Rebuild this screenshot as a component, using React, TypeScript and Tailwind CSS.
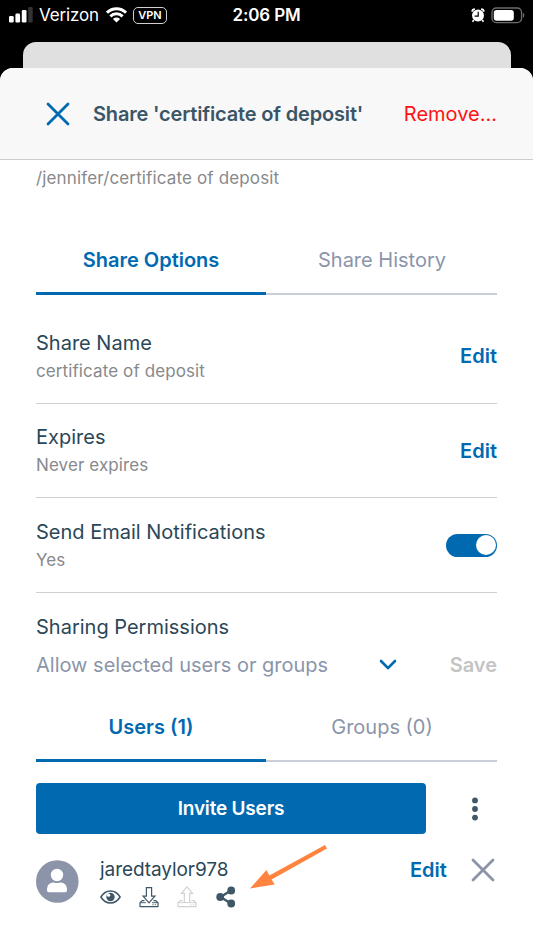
import { ReactNode } from "react";
import clsx from "clsx";

type TabsProps = {
    active: string;
    inactive: string;
    className?: string;
};

type OptionRowProps = {
    title: string;
    value: string;
    action: ReactNode;
    className: string;
};

function SignalIcon() {
    return (
        <svg width="24" height="16" viewBox="0 0 24 16">
            <rect x="0" y="9" width="4.7" height="6.6" rx="1.3" fill="#fff" />
            <rect x="6.4" y="6.6" width="4.7" height="9" rx="1.3" fill="#fff" />
            <rect x="12.8" y="3" width="4.7" height="12.6" rx="1.3" fill="#fff" />
            <rect x="19.2" y="0" width="4.5" height="15.6" rx="1.3" fill="#343434" />
        </svg>
    );
}

function WifiIcon() {
    return (
        <svg width="21" height="16" viewBox="0 0 21 16" fill="none" stroke="#fff" strokeWidth="3">
            <path d="M1 5.7a13.4 13.4 0 0 1 19 0" />
            <path d="M4.4 9.4a8.6 8.6 0 0 1 12.2 0" />
            <path d="M10.5 15.6 6.9 12a5.1 5.1 0 0 1 7.2 0z" fill="#fff" stroke="none" />
        </svg>
    );
}

function AlarmIcon() {
    return (
        <svg width="14" height="15" viewBox="0 0 14 15">
            <circle cx="7" cy="7.5" r="6" fill="#fff" />
            <path d="M1 3.7A3 3 0 0 1 3.9 1.100M13 3.700A3 3 0 0 0 10.100 1.100M2.800 12 1.500 13.700M11.200 12 12.500 13.700" stroke="#fff" strokeWidth="1.700" fill="none" />
            <path d="M7.200 3.800v4.300H3.600" stroke="#000" strokeWidth="1.200" fill="none" />
        </svg>
    );
}

function BatteryIcon() {
    return (
        <svg width="34" height="17" viewBox="0 0 34 17">
            <rect x="1" y="1" width="29.6" height="14.6" rx="4.4" fill="none" stroke="#6b6b6b" strokeWidth="1.4" />
            <rect x="2.8" y="2.9" width="20" height="10.9" rx="2.8" fill="#fff" />
            <path d="M32 5.8c1.8.7 1.8 4.3 0 5z" fill="#6b6b6b" />
        </svg>
    );
}

function CrossIcon({ className }: { className: string }) {
    return (
        <svg width="24" height="24" viewBox="0 0 24 24" className={className} stroke="currentColor" strokeWidth="2.8" strokeLinecap="round">
            <path d="M2 2l20 20M22 2L2 22" />
        </svg>
    );
}

function AvatarIcon() {
    return (
        <svg width="43" height="43" viewBox="0 0 43 43" fill="#fff">
            <circle cx="21.3" cy="21.5" r="21.3" fill="#8c94a9" />
            <circle cx="21" cy="15" r="6.2" />
            <path d="M11 30.4v-1.6a6.4 6.4 0 0 1 6.4-6.4h.6a8 8 0 0 0 6 0h.6a6.4 6.4 0 0 1 6.4 6.4v1.6a1.8 1.8 0 0 1-1.8 1.8H12.8a1.8 1.8 0 0 1-1.8-1.8z" />
        </svg>
    );
}

function EyeIcon() {
    return (
        <svg width="21" height="14" viewBox="0 0 21 14" fill="none">
            <path d="M.9 7C3.2 3.2 6.6 1 10.500 1s7.300 2.200 9.600 6c-2.300 3.800-5.700 6-9.600 6S3.200 10.800.9 7z" stroke="#3f5767" strokeWidth="1.500" />
            <circle cx="10.500" cy="7" r="4.200" fill="#3f5767" />
            <circle cx="8.600" cy="5.200" r="1.600" fill="#fff" />
        </svg>
    );
}

function TransferIcon({ upload, className }: { upload?: boolean; className: string }) {
    return (
        <svg width="20" height="22" viewBox="0 0 20 22" className={className} fill="none" stroke="currentColor" strokeWidth="1.200">
            <path d="M5.500 14.700H3.200L1 16.600v4h18v-4l-2.200-1.900h-2.300" strokeLinejoin="round" />
            <path d="M1 16.700h6M13 16.700h6M13.400 18.700h1.200M15.800 18.700H17" strokeWidth=".9" />
            {upload ? (
                <path d="M10 .9l5.600 6.400h-2.900v9.200H7.300V7.300H4.400z" />
            ) : (
                <path d="M7.400 1.600h5.200v8.600h3.300L10 16.900l-5.900-6.700h3.300z" fill="#fff" />
            )}
        </svg>
    );
}

function ShareIcon() {
    return (
        <svg width="20" height="22" viewBox="0 0 20 22" fill="#3f5767">
            <path d="M15 4.600 4.500 11 15 17.400" fill="none" stroke="#3f5767" strokeWidth="2.400" />
            <circle cx="15.200" cy="4.500" r="3.900" />
            <circle cx="4.200" cy="11" r="3.900" />
            <circle cx="15.200" cy="17.500" r="3.900" />
        </svg>
    );
}

function Tabs({ active, inactive, className }: TabsProps) {
    return (
        <div className={clsx("flex w-[461px] text-center text-[20px] leading-6", className)}>
            <div className="w-[230px] border-b-[3px] border-[#0069b0] font-semibold text-[#0069b0]">{active}</div>
            <div className="flex flex-1 flex-col justify-between text-[#8b95aa]">
                <span className="pl-px">{inactive}</span>
                <div className="h-[2px] bg-[#c9ced8]" />
            </div>
        </div>
    );
}

function OptionRow({ title, value, action, className }: OptionRowProps) {
    return (
        <div className={clsx("flex items-center justify-between border-b border-[#cfd1d4]", className)}>
            <div className="pt-px">
                <div className="text-[20px] leading-7 text-[#2b4757]">{title}</div>
                <div className="text-[17px] leading-7 tracking-[0.1px] text-[#87898c]">{value}</div>
            </div>
            {action}
        </div>
    );
}

function EditLink() {
    return <button className="h-6 text-[20px] font-semibold leading-6 text-[#0069b0]">Edit</button>;
}

function Toggle() {
    return (
        <div className="flex h-[23px] w-[51px] items-center justify-end rounded-full bg-[#0069b0] pr-px">
            <div className="size-[20px] rounded-full bg-white" />
        </div>
    );
}

function StatusBar() {
    return (
        <div className="grid h-[42px] grid-cols-3 pt-[3px] text-white">
            <div className="flex h-6 items-center whitespace-nowrap pl-[9px]">
                <SignalIcon />
                <span className="ml-[6px] text-[17px] leading-6 tracking-[-0.15px]">Verizon</span>
                <span className="ml-[7px]">
                    <WifiIcon />
                </span>
                <span className="ml-[6px] flex h-[17px] w-[34px] items-center justify-center rounded-[5px] border border-[#d0d0d0] text-[11px] font-semibold">VPN</span>
            </div>
            <div className="text-center text-[17px] font-semibold leading-6 tracking-[-0.15px]">2:06 PM</div>
            <div className="flex h-6 items-center justify-end pr-[8px]">
                <AlarmIcon />
                <span className="ml-[6px]">
                    <BatteryIcon />
                </span>
            </div>
        </div>
    );
}

export default function App() {
    return (
        <div className="relative h-[948px] w-[533px] overflow-hidden bg-black font-['Inter',sans-serif]">
            <StatusBar />
            <div className="ml-[23px] h-[26px] w-[488px] rounded-t-[13px] bg-[#e0e0e0]" />
            <div className="bg-black">
                <div className="h-[880px] overflow-hidden rounded-t-[13px] bg-white">
                    <div className="flex h-[92px] items-center border-b border-[#cdcdcd] bg-[#f8f8f8] pl-[46px] pr-[36px] text-[20px] leading-6">
                        <CrossIcon className="text-[#0069b0]" />
                        <div className="ml-[23px] whitespace-nowrap font-semibold tracking-[-0.17px] text-[#3a5566]">Share 'certificate of deposit'</div>
                        <button className="ml-auto text-[#ff1212]">Remove...</button>
                    </div>

                    <div className="pl-[36px] pr-[36px]">
                        <div className="pt-[6px] text-[17px] leading-6 tracking-[0.14px] text-[#87898c]">/jennifer/certificate of deposit</div>

                        <Tabs active="Share Options" inactive="Share History" className="mt-[58px] h-[47px]" />

                        <div className="mt-[14px]">
                            <OptionRow title="Share Name" value="certificate of deposit" action={<EditLink />} className="h-[95px]" />
                            <OptionRow title="Expires" value="Never expires" action={<EditLink />} className="h-[94px]" />
                            <OptionRow title="Send Email Notifications" value="Yes" action={<Toggle />} className="h-[95px]" />
                        </div>

                        <div className="pt-[20px] text-[20px] leading-7 text-[#2b4757]">Sharing Permissions</div>
                        <div className="mt-[12px] flex items-center text-[20px] leading-6">
                            <span className="w-[343px] text-[#8b95aa]">Allow selected users or groups</span>
                            <svg width="18" height="12" viewBox="0 0 18 12" fill="none" stroke="#0069b0" strokeWidth="2.600" strokeLinecap="round" strokeLinejoin="round">
                                <path d="M2 2l7 7.200L16 2" />
                            </svg>
                            <span className="ml-auto font-semibold text-[#c4c4c4]">Save</span>
                        </div>

                        <Tabs active="Users (1)" inactive="Groups (0)" className="mt-[38px] h-[47px]" />

                        <div className="mt-[21px] flex items-center">
                            <button className="h-[51px] w-[390px] rounded-[4px] bg-[#0069b0] pt-px text-[19px] font-semibold tracking-[-0.2px] text-white">Invite Users</button>
                            <svg width="8" height="24" viewBox="0 0 8 24" fill="#3f5767" className="ml-[45px]">
                                <circle cx="4" cy="3.400" r="2.900" />
                                <circle cx="4" cy="12" r="2.900" />
                                <circle cx="4" cy="20.600" r="2.900" />
                            </svg>
                        </div>

                        <div className="mt-[24px] flex">
                            <div className="mt-[2px]">
                                <AvatarIcon />
                            </div>
                            <div className="ml-[21px] w-[310px]">
                                <div className="text-[19px] leading-6 tracking-[-0.07px] text-[#2b4757]">jaredtaylor978</div>
                                <div className="mt-[4px] flex items-center">
                                    <EyeIcon />
                                    <TransferIcon className="ml-[18px] text-[#3f5767]" />
                                    <TransferIcon upload className="ml-[18px] text-[#cfd1d4]" />
                                    <span className="ml-[19px]">
                                        <ShareIcon />
                                    </span>
                                </div>
                            </div>
                            <EditLink />
                            <CrossIcon className="ml-[24px] text-[#8c94a9]" />
                        </div>
                    </div>
                </div>
            </div>

            {/* callout arrow pointing at the share icon */}
            <svg width="80" height="46" viewBox="0 0 80 46" className="absolute left-[249px] top-[844px]" fill="#ff8440">
                <path d="M1 44.500 17.500 26l2.800 5.600L76 1l2 3.600-55.400 30.800 3.100 5.100z" />
            </svg>
        </div>
    );
}
